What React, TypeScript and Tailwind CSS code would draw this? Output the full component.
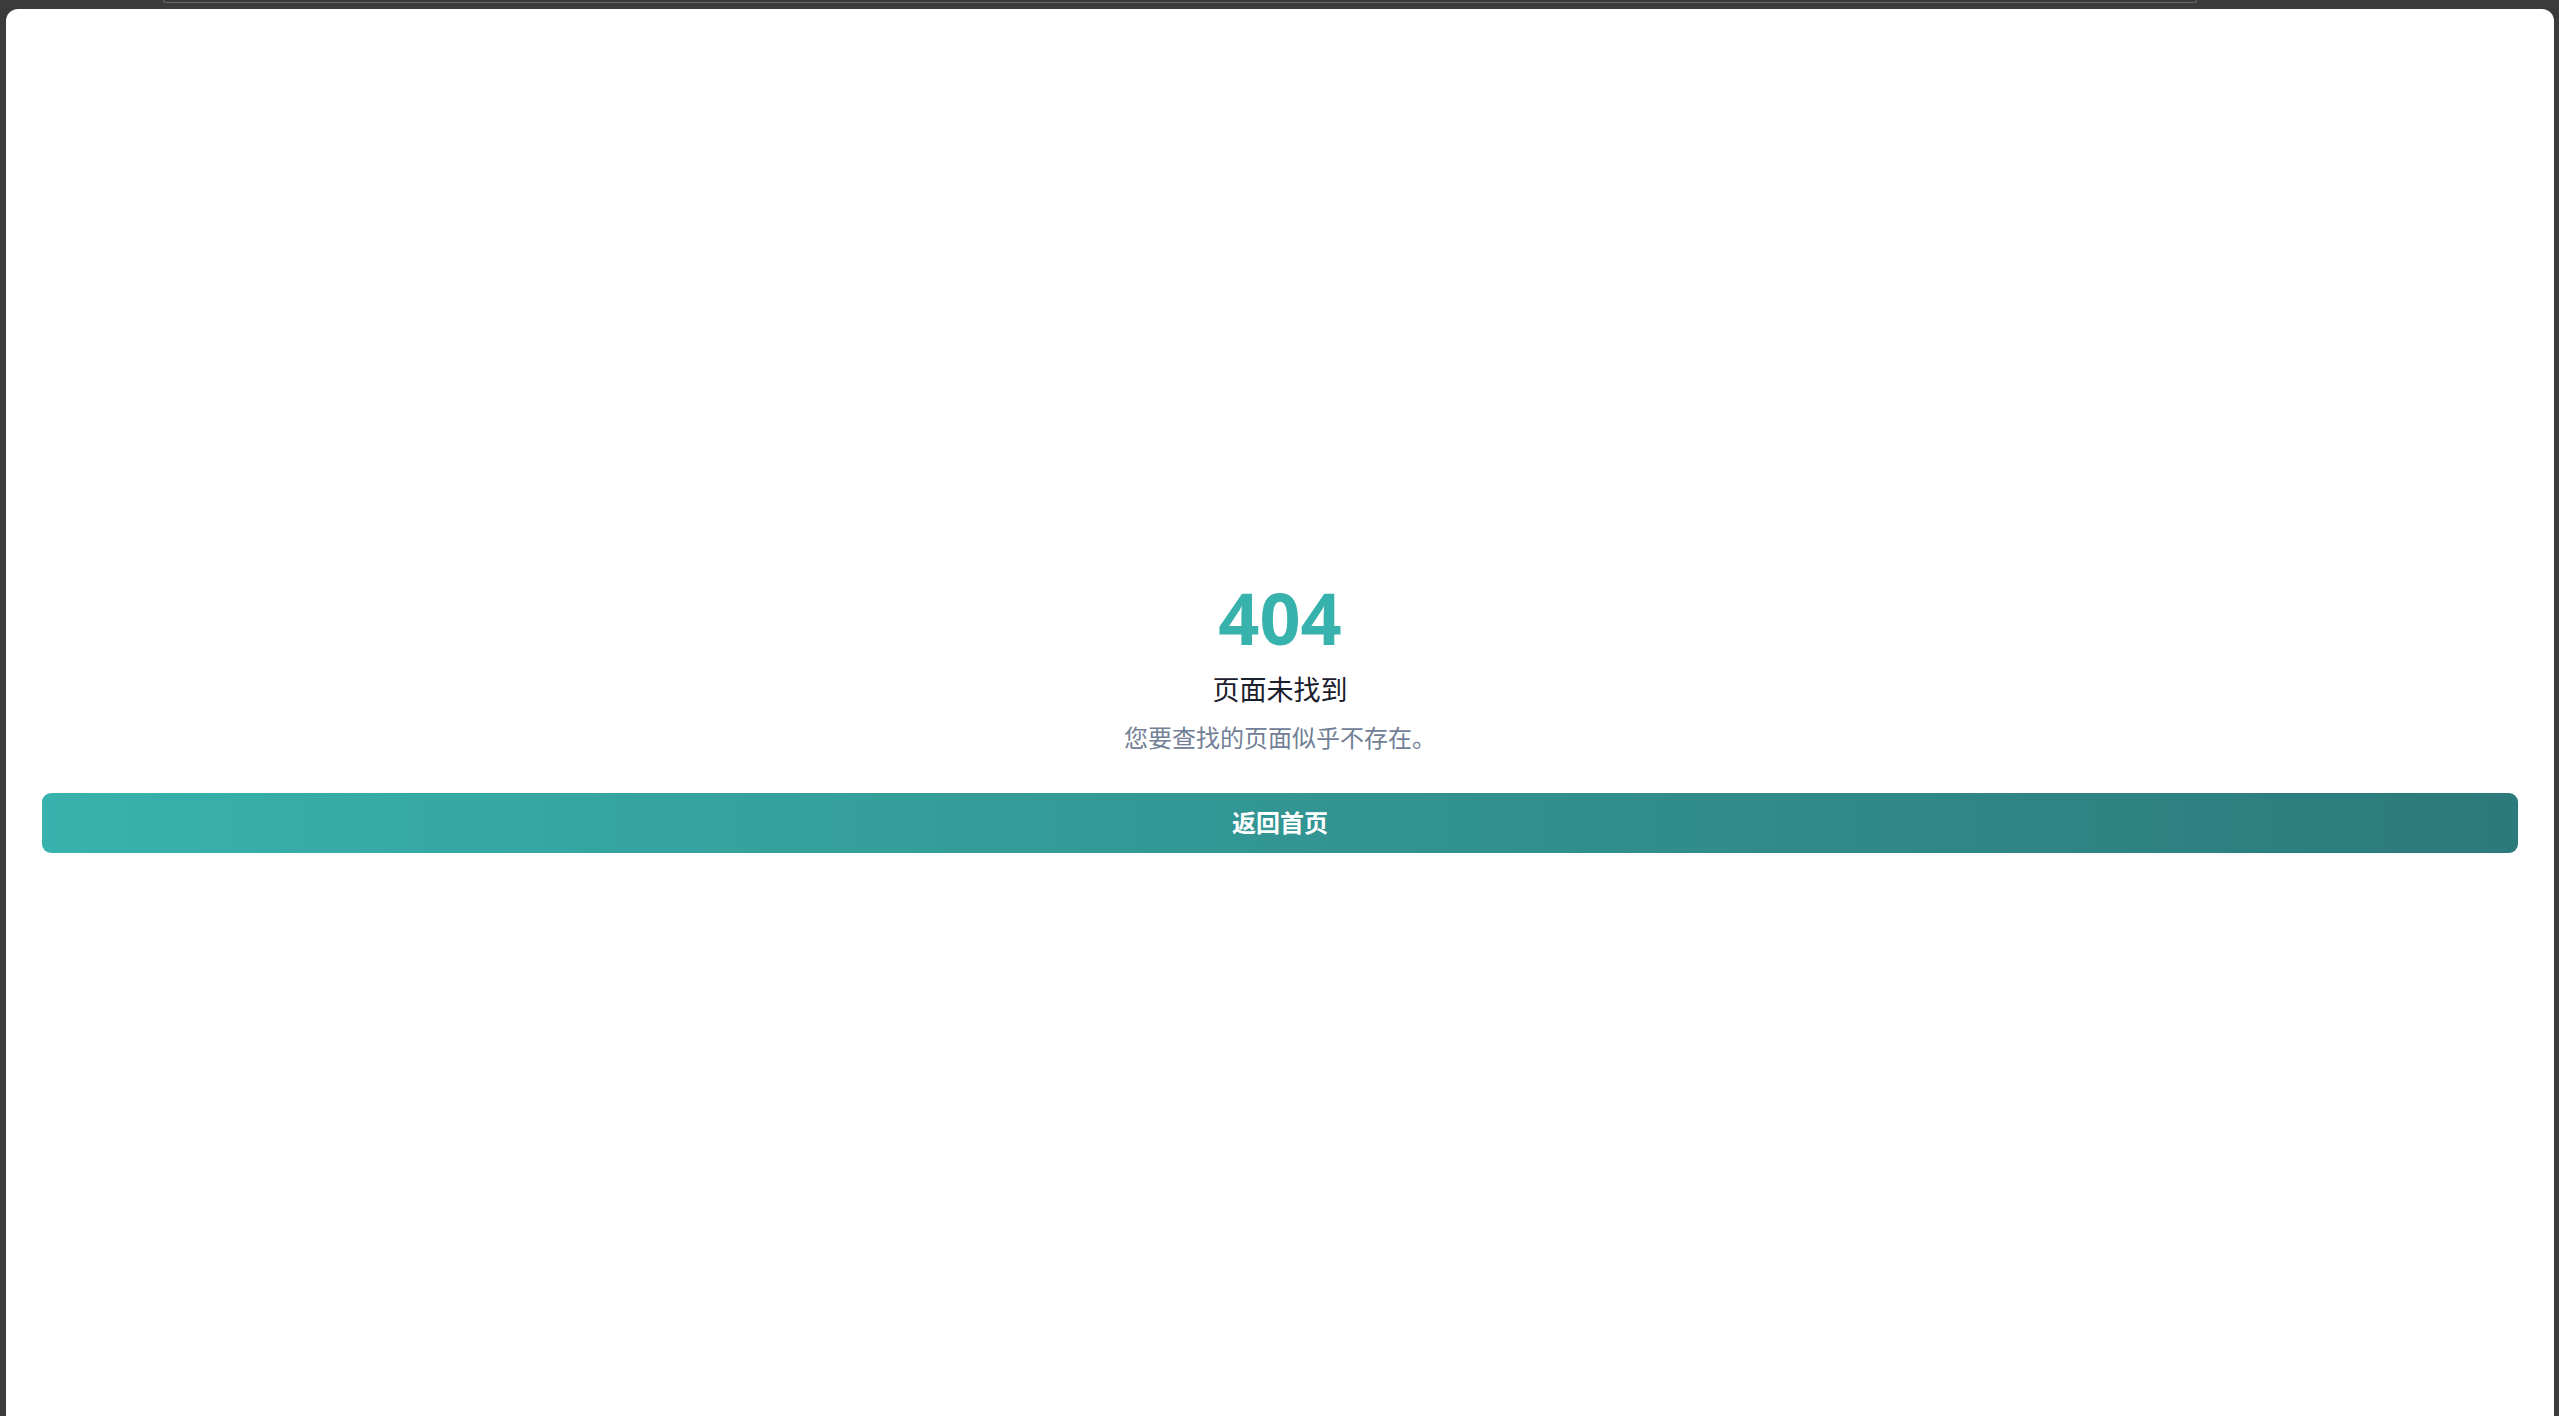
import React from 'react';

const font = '"Noto Sans", "Noto Sans CJK SC", sans-serif';

export default function App() {
  const goHome = () => {
    // console.log('home');
  };

  return (
    <div className="h-screen w-full overflow-hidden bg-[#3b3b3b] flex flex-col" style={{ fontFamily: font }}>
      {/* edge of the bar above, cut off */}
      <div className="h-[3px] ml-[163px] mr-[362px] border-b border-x border-[#6b6b6b] rounded-b-[10px]" />
      <div className="mt-[6px] ml-[6px] mr-[5px] flex-1 bg-white rounded-t-[12px] flex flex-col items-center justify-center px-[36px] pt-[8px]">
        <h1 className="text-[72px] leading-[72px] font-bold text-[#38b2ac] mb-[16px]">404</h1>
        <h2 className="text-[27px] leading-[42px] text-[#1a202c] mb-[9px]">页面未找到</h2>
        <p className="text-[24px] leading-[36px] text-[#718096]">您要查找的页面似乎不存在。</p>
        <button
          className="mt-[37px] w-full h-[60px] rounded-[9px] bg-gradient-to-r from-[#38b2ac] to-[#2c7a7b] text-white text-[24px] font-bold"
          onClick={() => {
            goHome();
          }}
        >
          返回首页
        </button>
      </div>
    </div>
  );
}
